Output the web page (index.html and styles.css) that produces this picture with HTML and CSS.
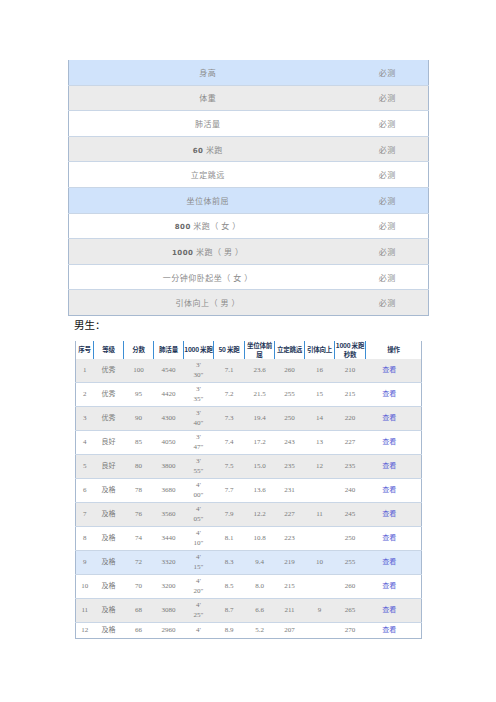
FILE: index.html
```html
<!DOCTYPE html>
<html lang="zh">
<head>
<meta charset="utf-8">
<title>体测项目</title>
<link rel="stylesheet" href="styles.css">
</head>
<body>
<div class="page">
  <table class="items">
    <colgroup><col class="c-name"><col class="c-req"></colgroup>
    <tbody>
      <tr class="blue"><td>身高</td><td>必测</td></tr>
      <tr class="grey"><td>体重</td><td>必测</td></tr>
      <tr><td>肺活量</td><td>必测</td></tr>
      <tr class="grey"><td><b>60</b> 米跑</td><td>必测</td></tr>
      <tr><td>立定跳远</td><td>必测</td></tr>
      <tr class="blue"><td>坐位体前屈</td><td>必测</td></tr>
      <tr><td><b>800</b> 米跑（ 女 ）</td><td>必测</td></tr>
      <tr class="grey"><td><b>1000</b> 米跑（ 男 ）</td><td>必测</td></tr>
      <tr><td>一分钟仰卧起坐（ 女 ）</td><td>必测</td></tr>
      <tr class="grey"><td>引体向上（ 男 ）</td><td>必测</td></tr>
    </tbody>
  </table>
  <p class="label">男生：</p>
  <table class="scores">
    <colgroup>
      <col style="width:18px"><col style="width:30px"><col style="width:30px"><col style="width:30px">
      <col style="width:30px"><col style="width:31px"><col style="width:30px"><col style="width:30px">
      <col style="width:30px"><col style="width:31px"><col style="width:56px">
    </colgroup>
    <thead>
      <tr>
        <th>序号</th><th>等级</th><th>分数</th><th>肺活量</th><th>1000 米跑</th><th>50 米跑</th>
        <th>坐位体前<br>屈</th><th>立定跳远</th><th>引体向上</th><th>1000 米跑<br>秒数</th><th class="last">操作</th>
      </tr>
    </thead>
    <tbody>
      <tr class="grey"><td>1</td><td>优秀</td><td>100</td><td>4540</td><td>3′<br>30″</td><td>7.1</td><td>23.6</td><td>260</td><td>16</td><td>210</td><td class="op">查看</td></tr>
      <tr><td>2</td><td>优秀</td><td>95</td><td>4420</td><td>3′<br>35″</td><td>7.2</td><td>21.5</td><td>255</td><td>15</td><td>215</td><td class="op">查看</td></tr>
      <tr class="grey"><td>3</td><td>优秀</td><td>90</td><td>4300</td><td>3′<br>40″</td><td>7.3</td><td>19.4</td><td>250</td><td>14</td><td>220</td><td class="op">查看</td></tr>
      <tr><td>4</td><td>良好</td><td>85</td><td>4050</td><td>3′<br>47″</td><td>7.4</td><td>17.2</td><td>243</td><td>13</td><td>227</td><td class="op">查看</td></tr>
      <tr class="grey"><td>5</td><td>良好</td><td>80</td><td>3800</td><td>3′<br>55″</td><td>7.5</td><td>15.0</td><td>235</td><td>12</td><td>235</td><td class="op">查看</td></tr>
      <tr><td>6</td><td>及格</td><td>78</td><td>3680</td><td>4′<br>00″</td><td>7.7</td><td>13.6</td><td>231</td><td></td><td>240</td><td class="op">查看</td></tr>
      <tr class="grey"><td>7</td><td>及格</td><td>76</td><td>3560</td><td>4′<br>05″</td><td>7.9</td><td>12.2</td><td>227</td><td>11</td><td>245</td><td class="op">查看</td></tr>
      <tr><td>8</td><td>及格</td><td>74</td><td>3440</td><td>4′<br>10″</td><td>8.1</td><td>10.8</td><td>223</td><td></td><td>250</td><td class="op">查看</td></tr>
      <tr class="blue"><td>9</td><td>及格</td><td>72</td><td>3320</td><td>4′<br>15″</td><td>8.3</td><td>9.4</td><td>219</td><td>10</td><td>255</td><td class="op">查看</td></tr>
      <tr><td>10</td><td>及格</td><td>70</td><td>3200</td><td>4′<br>20″</td><td>8.5</td><td>8.0</td><td>215</td><td></td><td>260</td><td class="op">查看</td></tr>
      <tr class="grey"><td>11</td><td>及格</td><td>68</td><td>3080</td><td>4′<br>25″</td><td>8.7</td><td>6.6</td><td>211</td><td>9</td><td>265</td><td class="op">查看</td></tr>
      <tr class="cut"><td>12</td><td>及格</td><td>66</td><td>2960</td><td>4′</td><td>8.9</td><td>5.2</td><td>207</td><td></td><td>270</td><td class="op">查看</td></tr>
    </tbody>
  </table>
</div>
</body>
</html>
```
FILE: styles.css
```css
html, body {
  margin: 0;
  padding: 0;
  background: #ffffff;
}

.page {
  padding: 60px 0 0 68px;
  font-family: "Liberation Serif", "Noto Sans CJK SC", serif;
}

/* ---------- items table ---------- */
.items {
  width: 360px;
  border-collapse: collapse;
  table-layout: fixed;
  border-left: 1px solid #a7b9d0;
  border-right: 1px solid #a7b9d0;
  border-bottom: 1px solid #a7b9d0;
}
.items .c-name { width: 278px; }
.items .c-req { width: 82px; }

.items td {
  height: 24.6px;
  padding: 0;
  text-align: center;
  font-size: 8px;
  color: #8c8c8c;
  border-top: 1px solid #c9d6e6;
  letter-spacing: 0.5px;
}
.items tr:first-child td { border-top: none; }
.items td b {
  font-family: "DejaVu Sans", sans-serif;
  font-weight: bold;
  color: #6a6a6a;
  font-size: 7px;
}

.items tr.blue td { background: #d0e3fb; }
.items tr.grey td { background: #ebebeb; }

/* ---------- label ---------- */
.label {
  margin: 1px 0 9px 6px;
  font-family: "Noto Sans CJK SC", "Noto Sans", sans-serif;
  font-size: 10.5px;
  line-height: 15px;
  color: #111111;
}

/* ---------- scores table ---------- */
.scores {
  margin-left: 7px;
  width: 346px;
  border-collapse: collapse;
  table-layout: fixed;
  border-left: 1px solid #a7b9d0;
  border-right: 1px solid #a7b9d0;
  border-bottom: 1px solid #a7b9d0;
}

.scores th {
  height: 18px;
  padding: 0;
  background: #ffffff;
  font-family: "Noto Sans CJK SC", sans-serif;
  font-weight: bold;
  font-size: 6.5px;
  line-height: 9px;
  color: #1d3557;
  text-align: center;
  white-space: nowrap;
  border-right: 1px solid #3d8ed4;
  letter-spacing: -0.2px;
}
.scores th.last { border-right: none; }

.scores td {
  height: 23px;
  padding: 0;
  text-align: center;
  font-size: 7px;
  line-height: 10px;
  color: #7a7a7a;
  border-top: 1px solid #c9d6e6;
  white-space: nowrap;
}
.scores tbody tr:first-child td { border-top: none; }
.scores td.op {
  color: #5a5fd6;
  padding-right: 8px;
}

.scores tr.grey td { background: #ebebeb; }
.scores tr.blue td { background: #dce9fa; }
.scores tr.cut td { height: 15px; }
```
